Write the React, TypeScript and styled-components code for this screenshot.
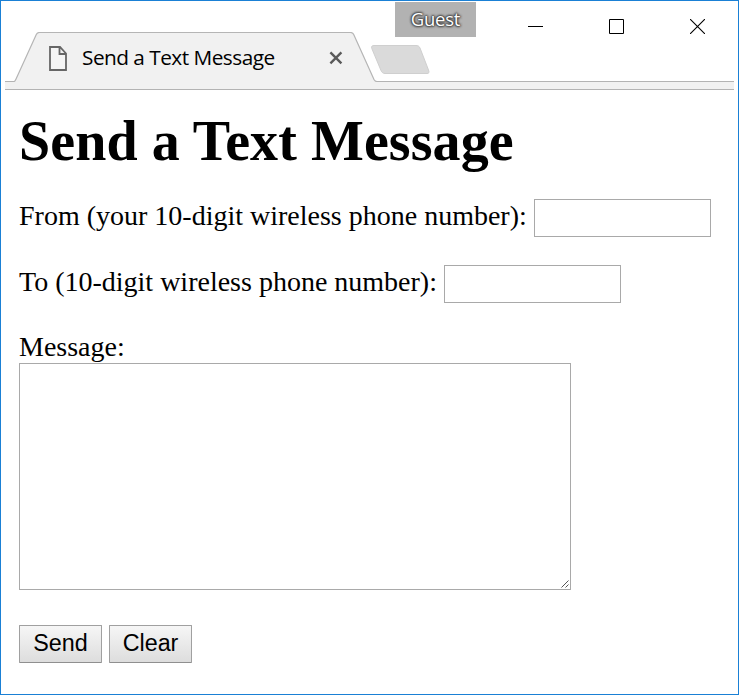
import React from "react";
import styled, { createGlobalStyle } from "styled-components";

const GlobalStyle = createGlobalStyle`
  *, *::before, *::after { box-sizing: border-box; }
  body { margin: 0; background: #fff; }
`;

const Window = styled.div`
  display: flex;
  flex-direction: column;
  width: 739px;
  height: 695px;
  overflow: hidden;
  border: 1px solid #1a80d5;
  background: #fff;
  color: #000;
`;

const TitleBar = styled.header`
  display: flex;
  align-items: flex-start;
  flex: none;
  height: 80px;
  padding-left: 13px;
`;

const Tab = styled.div`
  position: relative;
  z-index: 1;
  display: flex;
  align-items: center;
  flex: none;
  width: 363px;
  height: 50px;
  margin-top: 31px;
  padding: 0 34px 0 35px;
`;

const TabShape = styled.svg`
  position: absolute;
  inset: 0;
  z-index: -1;
`;

const TabTitle = styled.span`
  flex: 1;
  margin: 0 0 0 15px;
  font: 20.8px/28px "Open Sans", "Noto Sans", sans-serif;
  letter-spacing: -0.52px;
  white-space: nowrap;
`;

const PageIcon = styled.svg`
  flex: none;
  margin-top: 2px;
`;

const TabClose = styled.button`
  display: flex;
  margin: 2px 0 0;
  padding: 0;
  border: 0;
  background: none;
`;

const NewTab = styled.svg`
  flex: none;
  margin: 43px 0 0 -7px;
`;

const GuestBadge = styled.div`
  flex: none;
  width: 81px;
  height: 35px;
  margin: 1px 0 0 -36px;
  background: #b2b2b2;
  color: #fff;
  font: 18.5px/34px "Open Sans", "Noto Sans", sans-serif;
  letter-spacing: -0.25px;
  text-align: center;
  text-shadow: 0 0 2px #333, 0 0 2px #333, 0 0 3px #444, 0 0 3px #444;
`;

const WindowControls = styled.div`
  display: flex;
  gap: 66px;
  margin: 18px 0 0 52px;
`;

const ControlButton = styled.button`
  display: flex;
  padding: 0;
  border: 0;
  background: none;
`;

const Toolbar = styled.div`
  flex: none;
  height: 9px;
  margin: 0 4px;
  border: solid #b3b3b3;
  border-width: 1px 0;
  background: #f1f1f1;
`;

const Page = styled.main`
  padding: 19px 18px 0;
  font: 28px/32px "Liberation Serif", "Times New Roman", serif;
`;

const Heading = styled.h1`
  margin: 0 0 26px;
  font-size: 56px;
  line-height: 64px;
  letter-spacing: 0.08px;
  white-space: nowrap;
`;

const FieldRow = styled.label`
  display: flex;
  align-items: flex-start;
  height: 38px;
  margin-bottom: 28px;
  line-height: 34px;
  white-space: nowrap;
`;

const FieldLabel = styled.span<{ $width: number }>`
  flex: none;
  width: ${(p) => p.$width}px;
`;

const PhoneInput = styled.input`
  width: 177px;
  height: 38px;
  padding: 2px;
  border: 1px solid #a9a9a9;
  border-radius: 0;
  background: #fff;
  font: 23.33px "Liberation Sans", Arial, sans-serif;
  outline: none;
`;

const MessageLabel = styled.label`
  display: block;
  height: 32px;
`;

const MessageBox = styled.div`
  position: relative;
  width: 552px;
  height: 227px;
`;

const MessageInput = styled.textarea`
  display: block;
  width: 100%;
  height: 100%;
  margin: 0;
  padding: 4px;
  border: 1px solid #a9a9a9;
  border-radius: 0;
  background: #fff;
  font: 23.33px "Liberation Mono", monospace;
  resize: none;
  outline: none;
`;

const ResizeGrip = styled.svg`
  position: absolute;
  right: 2px;
  bottom: 2px;
  pointer-events: none;
`;

const Actions = styled.div`
  display: flex;
  gap: 7px;
  margin-top: 35px;
`;

const FormButton = styled.button`
  width: 83px;
  height: 38px;
  padding: 0 0 2px;
  border: 1px solid #a0a0a0;
  border-bottom-color: #8f8f8f;
  border-radius: 1px;
  background: linear-gradient(#f6f6f6, #dddddd);
  color: #000;
  font: 23.33px/34px "Liberation Sans", Arial, sans-serif;
`;

export default function App() {
  return (
    <>
      <GlobalStyle />
      <Window>
        <TitleBar>
          <Tab>
            <TabShape width="363" height="50" viewBox="0 0 363 50" aria-hidden="true">
              <path
                d="M0 49.5C.9 49.5 1.2 48.8 1.8 47.5L22.3 2.5C23 1 23.8.5 25.5.5H336.5C338 .5 339 1 339.7 2.5L360 47.5C360.7 48.9 361.2 49.5 363 49.5V50H0Z"
                fill="#f1f1f1"
              />
              <path
                d="M0 49.5C.9 49.5 1.2 48.8 1.8 47.5L22.3 2.5C23 1 23.8.5 25.5.5H336.5C338 .5 339 1 339.7 2.5L360 47.5C360.7 48.9 361.2 49.5 363 49.5"
                fill="none"
                stroke="#b5b5b5"
                strokeWidth="1.2"
              />
            </TabShape>
            <PageIcon width="18" height="25" viewBox="0 0 18 25" aria-hidden="true">
              <path d="M1 1H11L17 7.5V24H1ZM10.5 1V8H17" fill="#f5f5f5" stroke="#666" strokeWidth="1.8" />
            </PageIcon>
            <TabTitle>Send a Text Message</TabTitle>
            <TabClose aria-label="Close tab">
              <svg width="14" height="14" viewBox="0 0 14 14">
                <path d="M1.4 1.4L12.4 12.4M12.4 1.4L1.4 12.4" stroke="#5a5a5a" strokeWidth="2.4" />
              </svg>
            </TabClose>
          </Tab>
          <NewTab width="61" height="31" viewBox="0 0 61 31" aria-label="New tab">
            <path
              d="M4 1.5H46C48 1.5 49 2 50 4L58.5 26C59.5 28.5 59 29.5 57 29.5H15C13 29.5 12 28.5 11 26.5L1.8 4.5C1 2.5 2 1.5 4 1.5Z"
              fill="#dadada"
              stroke="#cfcfcf"
            />
          </NewTab>
          <GuestBadge>Guest</GuestBadge>
          <WindowControls>
            <ControlButton aria-label="Minimize">
              <svg width="15" height="15" viewBox="0 0 15 15">
                <path d="M0 7.5H15" stroke="#000" />
              </svg>
            </ControlButton>
            <ControlButton aria-label="Maximize">
              <svg width="15" height="15" viewBox="0 0 15 15">
                <path d="M.5.5H14.5V14.5H.5Z" fill="none" stroke="#000" />
              </svg>
            </ControlButton>
            <ControlButton aria-label="Close">
              <svg width="15" height="15" viewBox="0 0 15 15">
                <path d="M0 0L15 15M15 0L0 15" stroke="#000" strokeWidth="1.1" />
              </svg>
            </ControlButton>
          </WindowControls>
        </TitleBar>
        <Toolbar />
        <Page>
          <Heading>Send a Text Message</Heading>
          <FieldRow>
            <FieldLabel $width={515}>From (your 10-digit wireless phone number):</FieldLabel>
            <PhoneInput />
          </FieldRow>
          <FieldRow>
            <FieldLabel $width={425}>To (10-digit wireless phone number):</FieldLabel>
            <PhoneInput />
          </FieldRow>
          <MessageLabel htmlFor="message">Message:</MessageLabel>
          <MessageBox>
            <MessageInput id="message" />
            <ResizeGrip width="8" height="8" viewBox="0 0 8 8" aria-hidden="true">
              <path d="M.5 7.5L7.5.5M4.5 7.5L7.5 4.5" stroke="#555" />
            </ResizeGrip>
          </MessageBox>
          <Actions>
            <FormButton>Send</FormButton>
            <FormButton>Clear</FormButton>
          </Actions>
        </Page>
      </Window>
    </>
  );
}
